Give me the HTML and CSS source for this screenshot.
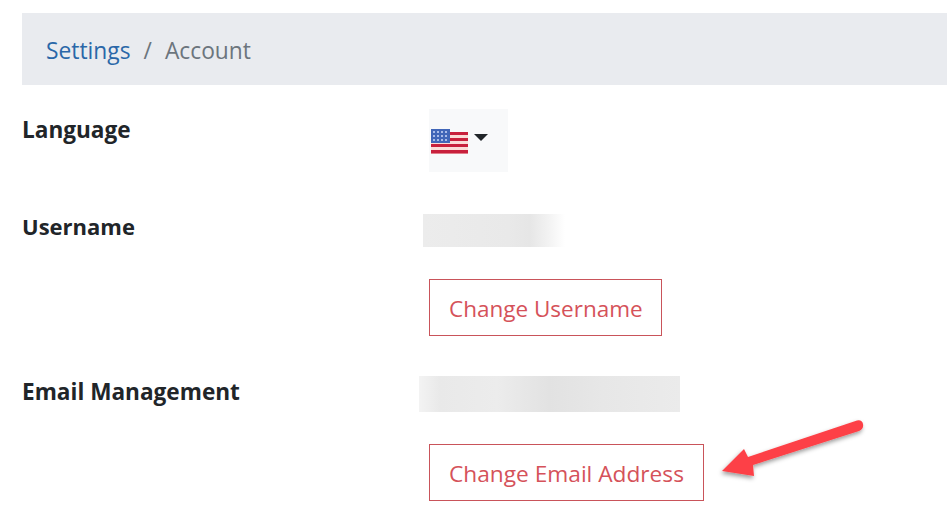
FILE: index.html
```html
<!DOCTYPE html>
<html lang="en">
<head>
    <meta charset="UTF-8">
    <meta name="viewport" content="width=device-width, initial-scale=1.0">
    <title>Account Settings</title>
    <link rel="stylesheet" href="styles.css">
</head>
<body>

    <!-- Breadcrumb -->
    <nav class="breadcrumb">
        <a href="#">Settings</a>
        <span class="divider">/</span>
        <span class="current">Account</span>
    </nav>

    <!-- Account rows -->
    <div class="rows">
        <div class="label label-language">Language</div>
        <div class="value">
            <button class="lang-btn" type="button">
                <svg class="flag" width="37" height="25" viewBox="0 0 37 25">
                    <rect x="0" y="3" width="37" height="22" fill="#fbdcd8"/>
                    <rect x="0" y="3" width="37" height="3" fill="#c8203c"/>
                    <rect x="0" y="9" width="37" height="3" fill="#c8203c"/>
                    <rect x="0" y="15" width="37" height="3" fill="#c8203c"/>
                    <rect x="0" y="21" width="37" height="3.5" fill="#c8203c"/>
                    <rect x="0" y="0" width="19" height="14" fill="#4166b8"/>
                    <g fill="#a9bbe8">
                        <rect x="2" y="2" width="2" height="2"/>
                        <rect x="6" y="2" width="2" height="2"/>
                        <rect x="10" y="2" width="2" height="2"/>
                        <rect x="14" y="2" width="2" height="2"/>
                        <rect x="2" y="6" width="2" height="2"/>
                        <rect x="6" y="6" width="2" height="2"/>
                        <rect x="10" y="6" width="2" height="2"/>
                        <rect x="14" y="6" width="2" height="2"/>
                        <rect x="2" y="10" width="2" height="2"/>
                        <rect x="6" y="10" width="2" height="2"/>
                        <rect x="10" y="10" width="2" height="2"/>
                        <rect x="14" y="10" width="2" height="2"/>
                    </g>
                </svg>
                <span class="caret"></span>
            </button>
        </div>

        <div class="label label-username">Username</div>
        <div class="value">
            <div class="redacted redacted-username"></div>
            <a class="btn-outline btn-username" href="#">Change Username</a>
        </div>

        <div class="label label-email">Email Management</div>
        <div class="value">
            <div class="redacted redacted-email"></div>
            <a class="btn-outline" href="#">Change Email Address</a>
        </div>
    </div>

    <!-- Annotation arrow -->
    <svg class="arrow" width="160" height="80" viewBox="0 0 160 80">
        <defs>
            <filter id="arrowShadow" x="-20%" y="-40%" width="140%" height="180%">
                <feDropShadow dx="-1" dy="2.5" stdDeviation="2" flood-color="#000" flood-opacity="0.4"/>
            </filter>
        </defs>
        <path d="M6 53 L28 31 L32 39 L141 2.500 Q146 1.500 147 6 Q148 11 143 13 L37 47 L38 58 Z" fill="#fd4146" filter="url(#arrowShadow)"/>
    </svg>

</body>
</html>
```

FILE: styles.css
```css
body {
    margin: 0;
    font-family: 'Open Sans', 'Noto Sans', sans-serif;
    background-color: #ffffff;
    color: #212529;
    overflow: hidden;
    height: 523px;
    position: relative;
}

.breadcrumb {
    margin: 13px 0 0 22px;
    height: 69px;
    padding: 3px 0 0 24px;
    display: flex;
    align-items: center;
    background-color: #e9ebef;
    font-size: 22.800px;
}

.breadcrumb a {
    color: #2a67a8;
    text-decoration: none;
}

.divider {
    color: #6c757d;
    margin: 0 13px;
}

.current {
    color: #6c757d;
}

.rows {
    display: grid;
    grid-template-columns: 407px 1fr;
    padding-left: 22px;
}

.label {
    font-size: 22.600px;
    font-weight: 700;
    line-height: 30px;
}

.label-language {
    padding-top: 30px;
}

.label-username {
    padding-top: 39px;
    font-size: 22px;
}

.label-email {
    padding-top: 41px;
}

.lang-btn {
    display: flex;
    align-items: center;
    width: 79px;
    height: 63px;
    margin: 24px 0 0 0;
    padding: 0 0 0 2px;
    border: none;
    background-color: #f8f9fa;
}

.flag {
    display: block;
    margin-top: 1px;
}

.caret {
    width: 0;
    height: 0;
    margin: -6px 0 0 6px;
    border-left: 7.500px solid transparent;
    border-right: 7.500px solid transparent;
    border-top: 7.500px solid #212529;
}

.redacted-username {
    width: 142px;
    height: 33px;
    margin: 42px 0 32px -6px;
    background: linear-gradient(90deg, #ececec 0%, #e9e9e9 60%, #e6e6e6 75%, #f2f2f2 88%, #ffffff 100%);
}

.redacted-email {
    width: 261px;
    height: 36px;
    margin: 40px 0 32px -10px;
    background: linear-gradient(90deg, #f3f3f3 0%, #e9e9e9 8%, #ececec 30%, #e2e2e2 50%, #e7e7e7 70%, #ebebeb 100%);
}

.btn-outline {
    display: inline-flex;
    align-items: center;
    height: 57px;
    box-sizing: border-box;
    padding: 2px 19px 0;
    border: 1px solid #c9545a;
    color: #d5525a;
    font-size: 22.700px;
    text-decoration: none;
}

.btn-username {
    font-size: 22.500px;
    padding-right: 18px;
}

/* Annotation over the page */
.arrow {
    position: absolute;
    left: 716px;
    top: 418px;
}
```
